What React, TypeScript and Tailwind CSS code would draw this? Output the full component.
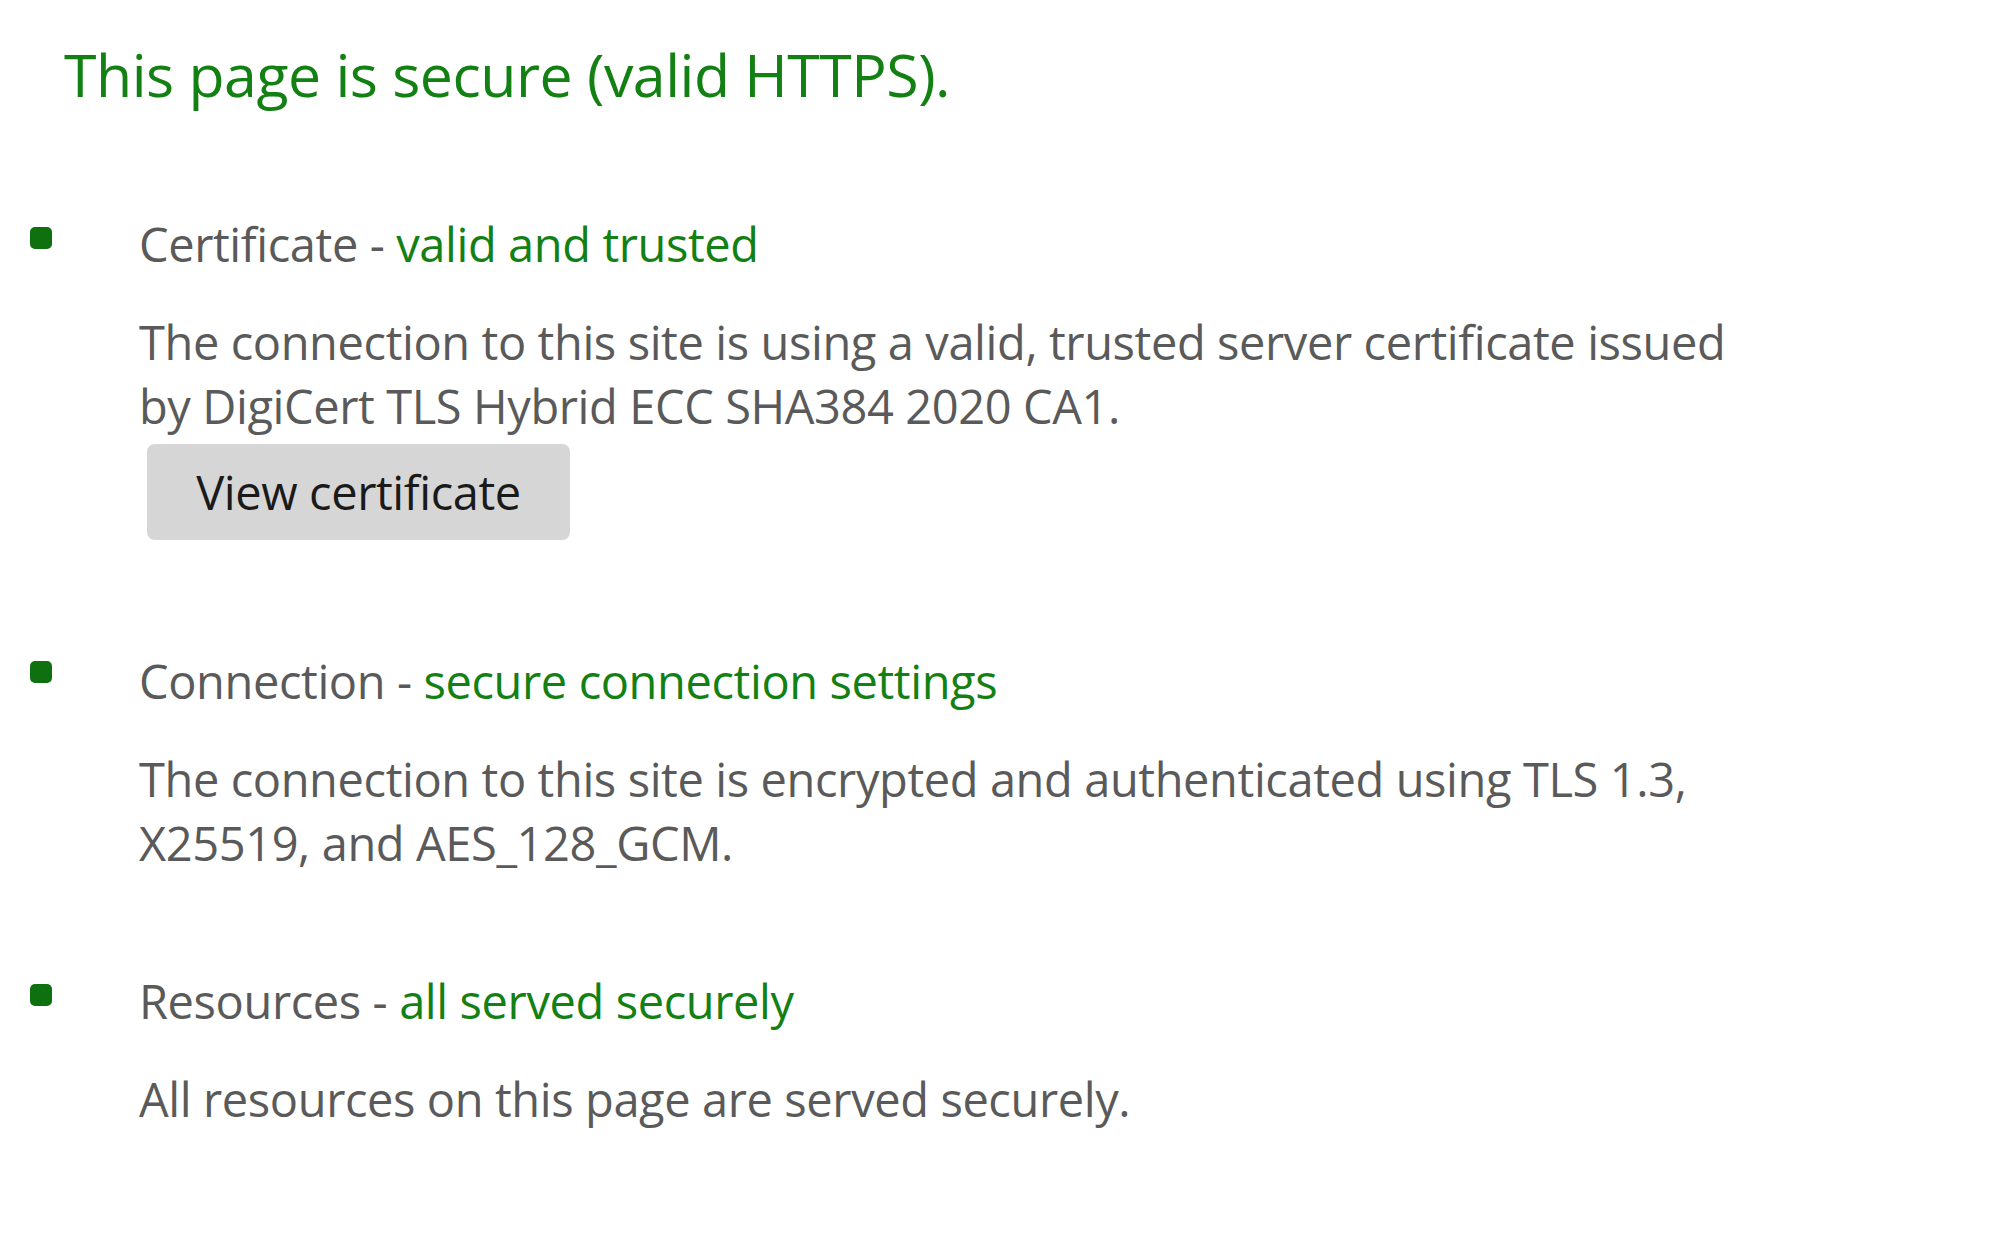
import React from "react";

const Bullet = ({ offset }: { offset: string }) => (
  <div className="w-[139px] shrink-0">
    <div className={`ml-[30px] h-[22px] w-[22px] rounded-[5px] bg-[#0e700e] ${offset}`} />
  </div>
);

const App = () => {
  return (
    <div
      className="min-h-screen w-[2000px] bg-white text-[#5a5a5a]"
      style={{ fontFamily: '"Open Sans", "Noto Sans", sans-serif' }}
    >
      <h1 className="pl-[64px] pt-[36px] text-[59px] leading-[76px] font-normal text-[#138013] tracking-[-0.5px]">
        This page is secure (valid HTTPS).
      </h1>

      {/* certificate */}
      <div className="mt-[100px] flex">
        <Bullet offset="mt-[15px]" />
        <div className="text-[47px] leading-[64px] tracking-[-0.4px]">
          <div>
            Certificate - <span className="text-[#138013]">valid and trusted</span>
          </div>
          <p className="mt-[34px]">
            The connection to this site is using a valid, trusted server certificate issued
            <br />
            by DigiCert TLS Hybrid ECC SHA384 2020 CA1.
          </p>
          <button className="ml-[8px] mt-[6px] h-[96px] w-[423px] rounded-[8px] bg-[#d6d6d6] text-[#1a1a1a]">
            View certificate
          </button>
        </div>
      </div>

      {/* connection */}
      <div className="mt-[109px] flex">
        <Bullet offset="mt-[12px]" />
        <div className="text-[47px] leading-[64px] tracking-[-0.4px]">
          <div>
            Connection - <span className="text-[#138013]">secure connection settings</span>
          </div>
          <p className="mt-[34px]">
            The connection to this site is encrypted and authenticated using TLS 1.3,
            <br />
            X25519, and AES_128_GCM.
          </p>
        </div>
      </div>

      {/* resources */}
      <div className="mt-[94px] flex">
        <Bullet offset="mt-[15px]" />
        <div className="text-[47px] leading-[64px] tracking-[-0.4px]">
          <div>
            Resources - <span className="text-[#138013]">all served securely</span>
          </div>
          <p className="mt-[34px]">All resources on this page are served securely.</p>
        </div>
      </div>
    </div>
  );
};

export default App;
